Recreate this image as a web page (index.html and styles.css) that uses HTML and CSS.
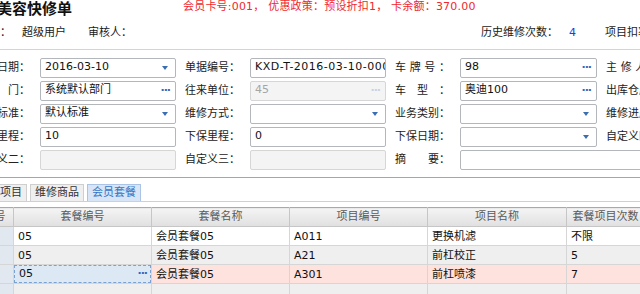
FILE: index.html
```html
<!DOCTYPE html>
<html lang="zh-CN">
  <head>
	<meta charset="UTF-8">
	<title>美容快修单</title>
	<link rel="stylesheet" href="styles.css">
  </head>
  <body>
  <div class="sheet">

	<div class="head">
	  <h1>美容快修单</h1>
	  <span class="promo">会员卡号:001， 优惠政策：预设折扣1， 卡余额：370.00</span>
	</div>

	<div class="info">
	  <span>制单人：</span>
	  <span class="maker">超级用户</span>
	  <span class="auditor">审核人：</span>
	  <span class="hist">历史维修次数：</span>
	  <span class="count">4</span>
	  <span class="rate">项目扣率：</span>
	</div>

	<!-- 表头字段 -->
	<div class="form">
	  <label>制单日期：</label>
	  <div class="field"><span class="val">2016-03-10</span><span class="arrow"></span></div>
	  <label>单据编号：</label>
	  <div class="field"><span class="val code">KXD-T-2016-03-10-0001</span></div>
	  <label><span class="jst">车牌号：</span></label>
	  <div class="field"><span class="val">98</span><span class="dots">···</span></div>
	  <label><span class="jst">主修人：</span></label>
	  <div class="field"><span class="val"></span><span class="dots">···</span></div>

	  <label>部　　门：</label>
	  <div class="field"><span class="val">系统默认部门</span><span class="dots">···</span></div>
	  <label>往来单位：</label>
	  <div class="field off"><span class="val">45</span><span class="dots">···</span></div>
	  <label><span class="jst">车型：</span></label>
	  <div class="field"><span class="val">奥迪100</span><span class="dots">···</span></div>
	  <label>出库仓库：</label>
	  <div class="field"><span class="val"></span><span class="arrow"></span></div>

	  <label>工时标准：</label>
	  <div class="field"><span class="val">默认标准</span><span class="arrow"></span></div>
	  <label>维修方式：</label>
	  <div class="field"><span class="val"></span><span class="arrow"></span></div>
	  <label>业务类别：</label>
	  <div class="field"><span class="val"></span><span class="arrow"></span></div>
	  <label>维修进度：</label>
	  <div class="field"><span class="val"></span><span class="arrow"></span></div>

	  <label>进厂里程：</label>
	  <div class="field"><span class="val">10</span></div>
	  <label>下保里程：</label>
	  <div class="field"><span class="val">0</span></div>
	  <label>下保日期：</label>
	  <div class="field"><span class="val"></span><span class="arrow"></span></div>
	  <label>自定义四：</label>
	  <div class="field"><span class="val"></span></div>

	  <label>自定义二：</label>
	  <div class="field off"><span class="val"></span></div>
	  <label>自定义三：</label>
	  <div class="field off"><span class="val"></span></div>
	  <label>摘　　要：</label>
	  <div class="field wide"><span class="val"></span></div>
	</div>

	<div class="divider"></div>

	<div class="tabs">
	  <div class="tab">维修项目</div>
	  <div class="tab">维修商品</div>
	  <div class="tab active">会员套餐</div>
	</div>

	<!-- 会员套餐明细 -->
	<table class="grid">
	  <colgroup>
		<col style="width:38px"><col style="width:138px"><col style="width:138px">
		<col style="width:138px"><col style="width:139px"><col style="width:78px">
	  </colgroup>
	  <tr>
		<th>序号</th><th>套餐编号</th><th>套餐名称</th><th>项目编号</th><th>项目名称</th><th>套餐项目次数</th>
	  </tr>
	  <tr>
		<td class="num"></td><td>05</td><td>会员套餐05</td><td>A011</td><td>更换机滤</td><td>不限</td>
	  </tr>
	  <tr class="alt">
		<td class="num"></td><td>05</td><td>会员套餐05</td><td>A21</td><td>前杠校正</td><td>5</td>
	  </tr>
	  <tr class="hot">
		<td class="num"></td><td class="sel"><div class="sel-box"><span>05</span><span class="dots">···</span></div></td><td>会员套餐05</td><td>A301</td><td>前杠喷漆</td><td>7</td>
	  </tr>
	  <tr class="alt">
		<td class="num"></td><td></td><td></td><td></td><td></td><td></td>
	  </tr>
	</table>

  </div>
  </body>
</html>
```

FILE: styles.css
```css
* { box-sizing: border-box; }

body {
  margin: 0;
  width: 640px;
  height: 294px;
  overflow: hidden;
  background: #fff;
  color: #1a1a1a;
  font-family: "DejaVu Sans", "Noto Sans CJK SC", sans-serif;
  font-size: 11px;
}

.sheet {
  margin-left: -34px;
  width: 900px;
}

/* HEAD */
.head {
  display: flex;
  align-items: center;
  height: 16px;
}

h1 {
  margin: 0;
  width: 217px;
  padding-left: 31px;
  font-family: "Noto Sans CJK SC", sans-serif;
  font-size: 15px;
  line-height: 16px;
  font-weight: bold;
  color: #111;
}

.promo {
  color: #f0282d;
  line-height: 14px;
  margin-top: -2px;
  letter-spacing: 0.2px;
}

.info {
  display: flex;
  margin-top: 10px;
  height: 24px;
  line-height: 14px;
  padding-left: 1px;
  border-bottom: 1px solid #d4d4d4;
}

.maker { margin-left: 11px; }
.auditor { margin-left: 22px; }
.hist { margin-left: 349px; }
.count { margin-left: 11px; color: #2838e0; }
.rate { margin-left: 29px; }

/* FORM */
.form {
  display: grid;
  grid-template-columns: 74px 136px 74px 136px 74px 137px 74px 136px;
  grid-auto-rows: 20px;
  row-gap: 3px;
  padding-top: 8px;
}

.form label {
  text-align: right;
  padding-right: 10px;
  line-height: 20px;
  color: #222;
  white-space: nowrap;
}

.jst {
  display: inline-block;
  width: 55px;
  text-align: justify;
  text-align-last: justify;
}

.field {
  display: flex;
  align-items: center;
  border: 1px solid #b3b6bb;
  border-radius: 2px;
  background: #fff;
  padding-left: 4px;
  overflow: hidden;
}

.field .val {
  flex: 1;
  white-space: nowrap;
  overflow: hidden;
  line-height: 16px;
  margin-top: -2px;
  color: #111;
}

.field .code { letter-spacing: 0.5px; }

.field.off {
  background: #f4f4f4;
  border-color: #d6d6d6;
}

.field.off .val { color: #a5a5a5; }
.field.off .dots { color: #c9d2e0; }

.field.wide { grid-column: span 3; }

.arrow {
  width: 0;
  height: 0;
  border-left: 3px solid transparent;
  border-right: 3px solid transparent;
  border-top: 4px solid #3b6db3;
  margin-right: 7px;
}

.dots {
  color: #3567bd;
  font-weight: bold;
  letter-spacing: -1px;
  margin-right: 5px;
  line-height: 14px;
}

.divider {
  margin-top: 7px;
  border-top: 1px solid #a6a6a6;
}

/* TABS */
.tabs {
  display: flex;
  gap: 3px;
  padding-top: 6px;
  padding-left: 7px;
  border-bottom: 1px solid #d0d0d0;
}

.tab {
  height: 17px;
  line-height: 15px;
  padding: 0 4px;
  border: 1px solid #cfcfcf;
  border-bottom: none;
  background: #efefef;
  color: #333;
  white-space: nowrap;
}

.tab.active {
  background: #d8e5f6;
  border-color: #aac3e6;
  color: #3474c8;
}

/* GRID */
.grid {
  margin-top: 5px;
  margin-left: 9px;
  border-collapse: collapse;
  table-layout: fixed;
  width: 669px;
  border-top: 1px solid #a9a9a9;
}

.grid th {
  height: 19px;
  padding: 0;
  font-weight: normal;
  color: #5a5a5a;
  background: linear-gradient(#f4f4f4, #e0e0e0);
  border: 1px solid #c6c6c6;
  border-top: none;
  line-height: 16px;
  white-space: nowrap;
}

.grid td {
  height: 19px;
  padding: 1px 4px 0;
  border: 1px solid #d6d6d6;
  line-height: 16px;
  white-space: nowrap;
  overflow: hidden;
  color: #111;
}

.grid tr.alt td { background: #efefef; }
.grid tr.hot td { background: #fde2de; }

.grid td.num,
.grid tr.alt td.num,
.grid tr.hot td.num {
  background: #e1e8ef;
}

.grid tr.hot td.sel {
  background: #dce8f4;
  padding: 0;
}

.sel-box {
  display: flex;
  justify-content: space-between;
  align-items: center;
  height: 18px;
  padding-left: 4px;
  border: 1px dashed #79a1d2;
}

.sel-box .dots { margin-right: 3px; }
```
